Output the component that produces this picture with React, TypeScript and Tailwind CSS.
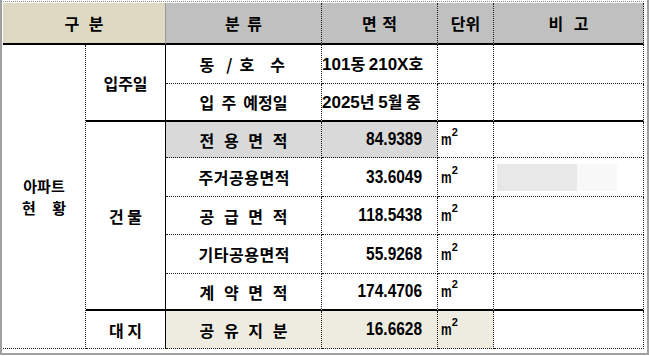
const ko = "font-['Noto_Sans_CJK_KR','Noto_Sans_CJK_SC',sans-serif]";
const num = "font-['Liberation_Sans','Noto_Sans_CJK_KR',sans-serif]";

// border helpers (per-side styles through arbitrary properties)
const dotR = "border-r [border-right-style:dotted] border-r-[#1a1a1a]";
const dotB = "border-b [border-bottom-style:dotted] border-b-[#1a1a1a]";
const solidR = "border-r border-r-black";
const thickB = "border-b-2 border-b-black";

function Spread({ chars, className }: { chars: string[]; className: string }) {
  return (
    <div className={`flex justify-between ${className}`}>
      {chars.map((c, i) => (
        <span key={i}>{c}</span>
      ))}
    </div>
  );
}

// digits in the latin face, hangul in the CJK face
function Mixed({ text }: { text: string }) {
  const parts = text.split(/([0-9A-Za-z.]+)/).filter((p) => p !== "");
  return (
    <span className="whitespace-pre">
      {parts.map((p, i) =>
        /[0-9A-Za-z.]/.test(p) ? (
          <span key={i} className={`${num} text-[17px]`}>{p}</span>
        ) : (
          <span key={i} className={`${ko} text-[16px]`}>{p}</span>
        ),
      )}
    </span>
  );
}

function Num({ v }: { v: string }) {
  return <span className={`${num} inline-block origin-right scale-x-[0.86] text-[18px]`}>{v}</span>;
}

function Unit() {
  return (
    <span className={`${num} flex items-start pl-[3px] leading-none`}>
      <span className="mr-[-4.5px] inline-block origin-left scale-x-[0.7] text-[17px]">m</span>
      <span className="mt-[-4px] text-[11px]">2</span>
    </span>
  );
}

type Row = {
  label: React.ReactNode;
  value: React.ReactNode;
  unit?: boolean;
  bg?: string;
  bgUnit?: boolean;
  note?: boolean;
  bottom: string;
};

const rows: Row[] = [
  {
    label: (
      <div className="mx-auto flex w-[88px] items-center">
        <span>동</span>
        <span className="ml-[12px]">/</span>
        <span className="ml-[7px]">호</span>
        <span className="ml-[16px]">수</span>
      </div>
    ),
    value: <Mixed text="101동 210X호" />,
    bottom: dotB,
  },
  {
    label: <Spread chars={["입", "주", "예정일"]} className="mx-auto w-[88px]" />,
    value: <Mixed text="2025년 5월 중" />,
    bottom: thickB,
  },
  { label: <Spread chars={[..."전용면적"]} className="mx-auto w-[88px]" />, value: "84.9389", unit: true, bg: "bg-[#d9d9d9]", bottom: dotB },
  { label: <Spread chars={[..."주거공용면적"]} className="mx-auto w-[90px] tracking-[-1px]" />, value: "33.6049", unit: true, note: true, bottom: dotB },
  { label: <Spread chars={[..."공급면적"]} className="mx-auto w-[88px]" />, value: "118.5438", unit: true, bottom: dotB },
  { label: <Spread chars={[..."기타공용면적"]} className="mx-auto w-[90px] tracking-[-1px]" />, value: "55.9268", unit: true, bottom: dotB },
  { label: <Spread chars={[..."계약면적"]} className="mx-auto w-[88px]" />, value: "174.4706", unit: true, bottom: thickB },
  { label: <Spread chars={[..."공유지분"]} className="mx-auto w-[88px]" />, value: "16.6628", unit: true, bg: "bg-[#eeece1]", bgUnit: true, bottom: dotB },
];

const rowStart = ["row-start-2", "row-start-3", "row-start-4", "row-start-5", "row-start-6", "row-start-7", "row-start-8", "row-start-9"];

export default function App() {
  return (
    <div className="h-[356px] w-[649px] bg-white">
      <div className="h-[355px] w-[649px] border-x-2 border-b-2 border-[#a0a0a0] pt-px pr-[3px] pb-[4px] pl-px">
        <div className={`border-t border-dotted border-[#8a8a8a] pt-px ${ko} font-bold text-black`}>
          <div className="grid grid-cols-[83px_80px_156px_116px_56px_150px] grid-rows-[42px_39px_38px_36px_39px_38px_39px_37px_38px] text-[16px]">
            {/* header */}
            <div className={`col-span-2 col-start-1 row-start-1 flex items-center justify-center bg-[#ddd9c3] border-r border-r-[#9a9a9a] ${thickB}`}>
              <Spread chars={["구", "분"]} className="w-[39px]" />
            </div>
            <div className={`col-start-3 row-start-1 flex items-center justify-center bg-[#c0c0c0] ${dotR} ${thickB}`}>
              <Spread chars={["분", "류"]} className="w-[37px]" />
            </div>
            <div className={`col-start-4 row-start-1 flex items-center justify-center bg-[#c0c0c0] ${dotR} ${thickB}`}>
              <Spread chars={["면", "적"]} className="w-[35px]" />
            </div>
            <div className={`col-start-5 row-start-1 flex items-center justify-center bg-[#c0c0c0] ${dotR} ${thickB}`}>
              단위
            </div>
            <div className={`col-start-6 row-start-1 flex items-center justify-center bg-[#c0c0c0] ${dotR} ${thickB}`}>
              <Spread chars={["비", "고"]} className="w-[40px]" />
            </div>

            {/* left groups */}
            <div className={`col-start-1 row-span-8 row-start-2 flex flex-col items-center justify-center text-[15px] leading-[22px] ${dotR} ${dotB}`}>
              <span className="w-[44px] text-center">아파트</span>
              <Spread chars={["현", "황"]} className="w-[44px]" />
            </div>
            <div className={`col-start-2 row-span-2 row-start-2 flex items-center justify-center ${solidR} ${thickB}`}>입주일</div>
            <div className={`col-start-2 row-span-5 row-start-4 flex items-center justify-center whitespace-pre ${solidR} ${thickB}`}>건 물</div>
            <div className={`col-start-2 row-start-9 flex items-center justify-center whitespace-pre ${solidR} ${dotB}`}>대 지</div>

            {rows.map((r, i) => (
              <div key={i} className="contents">
                <div className={`col-start-3 ${rowStart[i]} flex items-center ${r.bg ?? ""} ${dotR} ${r.bottom}`}>{r.label}</div>
                <div
                  className={`col-start-4 ${rowStart[i]} flex items-center ${r.unit ? "justify-end pr-[15px]" : "justify-start pl-0"} ${r.bg ?? ""} ${dotR} ${r.bottom}`}
                >
                  {typeof r.value === "string" ? <Num v={r.value} /> : r.value}
                </div>
                <div className={`col-start-5 ${rowStart[i]} flex items-center ${r.bgUnit ? r.bg : ""} ${dotR} ${r.bottom}`}>
                  {r.unit ? <Unit /> : null}
                </div>
                <div className={`col-start-6 ${rowStart[i]} flex items-center ${dotR} ${r.bottom}`}>
                  {r.note ? (
                    <div className="ml-[3px] flex h-[27px]">
                      <div className="w-[80px] bg-[#e8e8e8]" />
                      <div className="w-[40px] bg-[#f8f8f8]" />
                    </div>
                  ) : null}
                </div>
              </div>
            ))}
          </div>
        </div>
      </div>
    </div>
  );
}
